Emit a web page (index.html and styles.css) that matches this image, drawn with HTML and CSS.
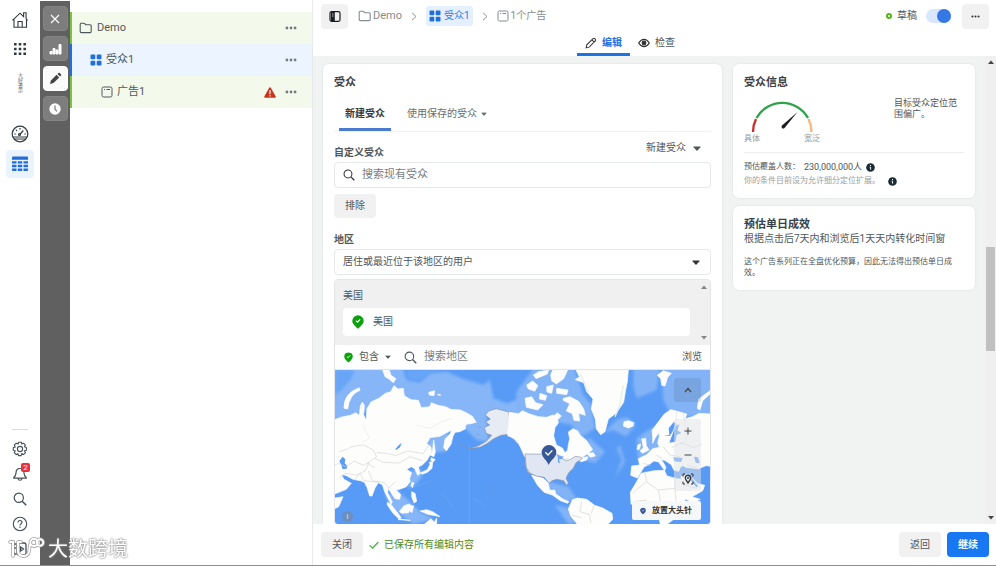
FILE: index.html
```html
<!DOCTYPE html>
<html lang="zh-CN">
<head>
<meta charset="utf-8">
<meta name="viewport" content="width=device-width, initial-scale=1">
<title>受众1</title>
<link rel="stylesheet" href="styles.css">
</head>
<body>
<svg class="defs" aria-hidden="true">
  <symbol id="i-folder" viewBox="0 0 14 12"><path d="M1.2 9.6V2.2q0-1 1-1h2.6q.6 0 1 .5l.8 1h4.6q1 0 1 1v5.9q0 1-1 1h-9q-1 0-1-1z" fill="none" stroke="currentColor" stroke-width="1.1"/></symbol>
  <symbol id="i-squares" viewBox="0 0 12 12"><path d="M1.5.5h2.8q1 0 1 1v2.8q0 1-1 1H1.500q-1 0-1-1V1.500q0-1 1-1zm6.200 0h2.800q1 0 1 1v2.800q0 1-1 1H7.700q-1 0-1-1V1.500q0-1 1-1zM1.500 6.700h2.800q1 0 1 1v2.800q0 1-1 1H1.500q-1 0-1-1V7.700q0-1 1-1zm6.200 0h2.800q1 0 1 1v2.800q0 1-1 1H7.700q-1 0-1-1V7.700q0-1 1-1z" fill="#216fdb"/></symbol>
  <symbol id="i-ad" viewBox="0 0 12 12"><rect x="1" y="1" width="10" height="10" rx="1.500" fill="none" stroke="currentColor"/><path d="M3 3.500h1M5.500 3.500H9" stroke="currentColor"/></symbol>
  <symbol id="i-dots" viewBox="0 0 12 4"><path d="M.5 2a1.400 1.400 0 1 0 2.800 0a1.400 1.400 0 1 0-2.800 0M4.600 2a1.400 1.400 0 1 0 2.800 0a1.400 1.400 0 1 0-2.800 0M8.700 2a1.400 1.400 0 1 0 2.800 0a1.400 1.400 0 1 0-2.800 0" fill="currentColor"/></symbol>
  <symbol id="i-search" viewBox="0 0 14 14"><circle cx="5.800" cy="5.800" r="4.600" fill="none" stroke="currentColor" stroke-width="1.200"/><path d="M9.200 9.200l4 4" stroke="currentColor" stroke-width="1.500"/></symbol>
  <symbol id="i-caret" viewBox="0 0 8 5"><path d="M.8.5h6.400q.6.200.2.800L4.500 4.600q-.5.400-1 0L.600 1.300Q.200.700.800.500z" fill="currentColor"/></symbol>
  <symbol id="i-chev" viewBox="0 0 6 9"><path d="M1 .800l4 3.700-4 3.700" fill="none" stroke="currentColor"/></symbol>
  <symbol id="i-pin" viewBox="0 0 12 14"><path d="M6 .300a5.700 5.700 0 0 1 5.700 5.600C11.700 9 8.500 11 6 13.800 3.500 11 .300 9 .300 5.900A5.700 5.700 0 0 1 6 .300z" fill="currentColor"/><path d="M4 5.800l1.500 1.400L8.200 4.400" fill="none" stroke="#fff" stroke-width="1.200"/></symbol>
  <symbol id="i-info" viewBox="0 0 9 9"><circle cx="4.500" cy="4.500" r="4.300" fill="#1c2b33"/><path d="M4.500 2v1.100M3.700 4.200h.9v2.400" stroke="#fff" fill="none"/></symbol>
</svg>

<div class="app">
  <nav class="nav" aria-label="主导航">
    <div class="nav-group">
      <a href="#" class="nav-item" aria-label="主页"><svg width="18" height="18" viewBox="0 0 18 18" fill="none" stroke="#333b40" stroke-width="1.100"><path d="M1.500 9.300L9 2.200l3.600 3.400V1.800h2.500v6l1.500 1.500M3 8.300v8h12.500V8M7 16.300v-5.800h4.200v5.800"/></svg></a>
      <button class="nav-item" aria-label="所有工具"><svg width="14" height="14" viewBox="0 0 14 14" fill="#333b40"><path d="M1 1h2.600v2.600H1zM5.700 1h2.600v2.600H5.700zM10.400 1H13v2.600h-2.600zM1 5.700h2.600v2.600H1zM5.700 5.700h2.600v2.600H5.700zM10.400 5.700H13v2.600h-2.600zM1 10.400h2.600V13H1zM5.700 10.400h2.600V13H5.700zM10.400 10.400H13V13h-2.600z"/></svg></button>
      <span class="nav-brand">大好書示</span>
      <a href="#" class="nav-item" aria-label="概览"><svg width="18" height="18" viewBox="0 0 18 18" fill="none" stroke="#333b40" stroke-width="1.200"><circle cx="9" cy="9" r="7.800"/><path d="M1.800 12h14.400M3 14h12M8.800 9.500l3.500-4" /><circle cx="8.500" cy="9.500" r="1"/><path d="M3.300 9h1.500M13.300 9h1.500M5 5l1 1M9 3v1.500"/></svg></a>
      <a href="#" class="nav-item active" aria-label="广告管理"><svg width="18" height="16" viewBox="0 0 18 16" fill="#216fdb"><path d="M2 .500h14q1 0 1 1v2.200H1V1.500q0-1 1-1zM1 5.200h4.500v2.400H1zM6.800 5.200h4.400v2.400H6.800zM12.500 5.200H17v2.400h-4.500zM1 8.800h4.500v2.400H1zM6.800 8.800h4.400v2.400H6.800zM12.500 8.800H17v2.400h-4.500zM1 12.400h4.500v2.600H2q-1 0-1-1zM6.800 12.400h4.400v2.600H6.800zM12.500 12.400H17V14q0 1-1 1h-3.500z"/></svg></a>
    </div>
    <div class="nav-group bottom">
      <button class="nav-item" aria-label="设置"><svg width="16" height="16" viewBox="0 0 16 16" fill="none" stroke="#465058" stroke-width="1.100"><path d="M6.700 1.300h2.600l.5 1.700 1.700-.9 1.900 1.900-.9 1.700 1.900.9v2.600l-1.900.7.9 1.800-1.900 1.900-1.800-.9-.7 1.900H6.600l-.7-1.900-1.700.9-1.900-1.900.9-1.700-1.900-.8V6.700L3.200 6l-.9-1.900 1.900-1.900 1.800.9z"/><circle cx="8" cy="8" r="2.600"/></svg></button>
      <button class="nav-item" aria-label="通知"><svg width="16" height="16" viewBox="0 0 16 16" fill="none" stroke="#465058" stroke-width="1.200"><path d="M8 2.500c-3 0-4 2-4 4.500 0 2-.8 3.200-2.200 4.500v.7h12.400v-.7C12.800 10.200 12 9 12 7c0-2.500-1-4.500-4-4.500zM6 12.500c.3 2.300 3.700 2.300 4 0"/></svg><span class="badge">2</span></button>
      <button class="nav-item" aria-label="搜索"><svg width="14" height="14"><use href="#i-search"/></svg></button>
      <button class="nav-item" aria-label="帮助"><svg width="16" height="16" viewBox="0 0 16 16" fill="none" stroke="#465058" stroke-width="1.100"><circle cx="8" cy="8" r="6.700"/><path d="M6 6.500c0-2.600 4-2.500 4-.2C10 7.800 8 7.600 8 9.400M8 10.600v1.300"/></svg></button>
      <button class="nav-item" aria-label="面板"><svg width="16" height="16" viewBox="0 0 16 16" fill="none" stroke="#465058" stroke-width="1.300"><rect x="5" y="2" width="9" height="12" rx="2"/><path d="M4.500 3H2v2M4.500 13H2v-2M2 7h2M8.500 6v4l3-2z"/></svg></button>
    </div>
  </nav>

  <aside class="rail" aria-label="视图">
    <button aria-label="关闭"><svg width="10" height="10" viewBox="0 0 10 10"><path d="M1 1l8 8M9 1L1 9" stroke="#fff" stroke-width="1.100"/></svg></button>
    <button aria-label="图表"><svg width="13" height="12" viewBox="0 0 13 12"><path d="M1 8.500h2V11H1zM4 5.500h2V11H4zM7 7h2v4H7zM10 1.500h2V11h-2z" fill="#fff" stroke="#fff"/></svg></button>
    <button class="on" aria-label="编辑"><svg width="13" height="13" viewBox="0 0 13 13" fill="#444"><path d="M1 12l.9-3.500L7.600 2.800l2.600 2.600-5.700 5.700zM8.500 1.900l.8-.8q.8-.6 1.500 0l1.100 1.100q.6.800 0 1.500l-.8.800z"/></svg></button>
    <button aria-label="历史"><svg width="12" height="12" viewBox="0 0 12 12"><circle cx="6" cy="6" r="5.700" fill="#fff"/><path d="M6 2.500V6.300l2 2" fill="none" stroke="#777" stroke-width="1.200"/></svg></button>
  </aside>

  <section class="tree" aria-label="广告结构">
    <div class="tree-row green"><svg width="14" height="12"><use href="#i-folder"/></svg><span class="name">Demo</span><button class="more" aria-label="更多"><svg width="12" height="4"><use href="#i-dots"/></svg></button></div>
    <div class="tree-row blue lvl2"><svg width="12" height="12"><use href="#i-squares"/></svg><span class="name">受众1</span><button class="more" aria-label="更多"><svg width="12" height="4"><use href="#i-dots"/></svg></button></div>
    <div class="tree-row green lvl3"><svg width="12" height="12"><use href="#i-ad"/></svg><span class="name">广告1</span><svg width="12" height="11" viewBox="0 0 12 11"><path d="M6 .300q.500 0 .8.500l4.900 8.700q.4 1.200-.8 1.300H1.100Q-.1 10.700.300 9.500L5.200.800Q5.500.300 6 .300z" fill="#c9341c"/><path d="M6 3.300v3.900M6 8.200v1.300" stroke="#fff" stroke-width="1.200"/></svg><button class="more" aria-label="更多"><svg width="12" height="4"><use href="#i-dots"/></svg></button></div>
  </section>

  <main class="main">
    <header class="top">
      <div class="crumbs">
        <button class="btn square" aria-label="切换侧栏"><svg width="12" height="11" viewBox="0 0 12 11"><rect x="1" y=".700" width="10" height="9.600" rx="1.500" fill="none" stroke="#1c1e21" stroke-width="1.200"/><path d="M2 1h3.800v9H2z" fill="#1c1e21"/><path d="M3 3h1.500M3 5h1.500" stroke="#fff" stroke-width=".7"/></svg></button>
        <a href="#" class="crumb first"><svg width="14" height="12"><use href="#i-folder"/></svg>Demo</a>
        <svg class="sep" width="6" height="9"><use href="#i-chev"/></svg>
        <a href="#" class="crumb current"><svg width="12" height="12"><use href="#i-squares"/></svg>受众1</a>
        <svg class="sep" width="6" height="9"><use href="#i-chev"/></svg>
        <a href="#" class="crumb"><svg width="12" height="12"><use href="#i-ad"/></svg>1个广告</a>
        <div class="status">
          <span class="ring"></span><label for="publish">草稿</label>
          <input type="checkbox" id="publish" class="switch" checked>
          <button class="btn square" aria-label="更多操作"><svg width="9" height="3" viewBox="0 0 12 4" color="#333"><use href="#i-dots"/></svg></button>
        </div>
      </div>
      <div class="modes">
        <button class="mode on"><svg width="12" height="12" viewBox="0 0 13 13" fill="none" stroke="#333" stroke-width="1.100"><path d="M1.200 11.800l.8-3.300L8.700 1.800q.9-.9 1.800 0l.7.700q.9.900 0 1.800L4.500 11zM7.500 3l2.500 2.500"/></svg>编辑</button>
        <button class="mode"><svg width="12" height="10" viewBox="0 0 12 10" fill="none" stroke="#333" stroke-width="1.200"><path d="M.700 5Q3 1.400 6 1.400T11.300 5Q9 8.600 6 8.600T.700 5z"/><circle cx="6" cy="5" r="1.800" fill="#333"/></svg>检查</button>
      </div>
    </header>

    <div class="work">
      <div class="cards">
        <section class="card audience">
          <h2>受众</h2>
          <div class="tabs"><button class="tab on">新建受众</button><button class="tab">使用保存的受众<svg width="6" height="4" viewBox="0 0 8 5"><use href="#i-caret"/></svg></button></div>
          <div class="field-head"><label for="custom">自定义受众</label><button class="link">新建受众<svg width="8" height="5"><use href="#i-caret"/></svg></button></div>
          <div class="box search"><svg width="12" height="12" viewBox="0 0 14 14"><use href="#i-search"/></svg><input id="custom" type="text" placeholder="搜索现有受众"></div>
          <button class="btn exclude">排除</button>
          <label class="place-label" for="place">地区</label>
          <div class="box choose"><select id="place"><option>居住或最近位于该地区的用户</option></select><svg width="8" height="5"><use href="#i-caret"/></svg></div>
          <div class="geo">
            <div class="picked">
              <div class="picked-body">
                <span>美国</span>
                <div class="picked-item"><svg width="12" height="14"><use href="#i-pin"/></svg>美国</div>
              </div>
              <div class="mini-scroll"><svg width="6" height="4" viewBox="0 0 6 4"><path d="M0 4l3-3.500L6 4z"/></svg><svg width="6" height="4" viewBox="0 0 6 4"><path d="M0 0l3 3.500L6 0z"/></svg></div>
            </div>
            <div class="include">
              <button class="link inc"><svg class="pin" width="9" height="11" viewBox="0 0 12 14"><use href="#i-pin"/></svg>包含<svg class="caret" width="6" height="4" viewBox="0 0 8 5"><use href="#i-caret"/></svg></button>
              <svg width="13" height="13" viewBox="0 0 14 14"><use href="#i-search"/></svg>
              <input type="text" placeholder="搜索地区" aria-label="搜索地区">
              <button class="link">浏览</button>
            </div>
            <div class="map">
              <svg class="map-art" viewBox="0 0 1125 462" preserveAspectRatio="xMidYMid slice" aria-label="世界地图">
                <defs><filter id="shelf" x="-5%" y="-5%" width="110%" height="110%"><feGaussianBlur stdDeviation="5"/></filter></defs>
                <rect width="1125" height="462" fill="#579bf6"/>
                <g transform="translate(-15 -15)">
                  <g fill="#86b6f8" filter="url(#shelf)">
                    <path d="M0 0H215L230 45 270 52 300 25 350 20 400 42 460 60 480 45 490 100 530 115 560 105 580 60 640 20V165L590 150 535 145 490 135 470 150 475 230 440 225 415 200 360 140 270 135 230 110 190 80 110 140 0 170z"/>
                    <path d="M285 215L345 200 360 205 345 260 310 262 290 245zM240 320L270 308 275 335 255 360 235 372zM165 390L200 375 240 410 270 440 310 462 250 478 185 430z"/>
                  </g>
                  <g filter="url(#shelf)"><path d="M15 15H75L65 40 35 75 15 90zM225 15H330L300 25 270 50 235 42z" fill="#68a5f7"/></g>
                  <g fill="#fdfdfc" stroke="#fdfdfc" stroke-width="2" stroke-linejoin="round">
                    <path d="M10 165l25-9 25-5 18-8 10 8 3-28 6-12 6 10-2 28 7 17 3-35 12-20 25-12 18-14 16-5 10-18 12 10 16-2 3 22 20 12 22 2 9 22 25-3 5-12 20 8 23 4 15 8 30 2 20 10 15 9 12 18-17 4-14 2-2 14-17 8-14 2-6 12-6 24-14 20-8-10 4-26 16-16 3-10-16 8-18 10-30 4-10 18 13 10 2 16-14 24-14 14-12 6 6 20-8 5-9-20-10-6-14 8 15 10-6 18 2 8-12 16-20 8-10 2 13 14-3 14-14-2-12-18-8-12-2 12 14 28-4 6-18-34-8-24-12-6-10 16-9 24h-7l-8-26-8-15-12-5-22-4-22-12-13-2 8 14 22 12-15 18-35 14z"/>
                    <path d="M42 130Q40 85 88 68L90 76Q58 88 53 132zM158 15h20l5 16 15 10-8 12-12-10-13-8zM296 82l18-5-2 15-14-2zM322 88l10 1-2 3zM300 270l7-10 4-35 5 35-4 15zM308 292l-2 18-14 12-16 6-4-5 20-9 8-16-2-7zM304 278l12 6-8 8-6-6zM246 352l6 2-5 14-4-6zM208 440l14-18 16-5 5 6-7 20-20 2zM172 412l10 5 22 28 10 14-7 3-18-17-17-25zM245 380l10 5 5 24-8 5-7-18zM238 420l13 3-5 20-6-5zM270 438l20-4 18 6 22 15-15-3-22-4zM205 462l36 4-36-2zM10 400l29-5-13 30-16 8zM283 478l20-17 10 10 7-12v19z"/>
                    <path d="M590 72l10-13v26zM584 98l16 2v30l-16-6z"/>
                  </g>
                  <path d="M28 288l10-13 8 8-2 12 8 8-2 8-12 2-4-12zM196 253l10-12 9-8-5 14-12 8z" fill="#579bf6"/>
                  <g fill="none" stroke="#d6d6d6" stroke-width="2">
                    <path d="M15 300l10-5 22 10 26-17 27 13 17-8-12 25-25 12-35-5-16 15M27 260l25-7 13-8 35-5 30 15 10 20-28 20 23 14M140 263l30 2 25 6 40-13 45 8 12-20 12-8M135 280l25 12 48 2 32-19 38 12M115 318l13 30 34 4 14 18 20-20M73 345l18-20 10 22 45 5"/>
                    <path d="M260 180l40 10 36-20 30-10M98 180l20 40-20 12" opacity=".5"/>
                  </g>
                  <path d="M536 143h34v100l-18-20-16-14z" fill="#fdfdfc"/>
                  <path d="M466 150l10-12 22-7 38 10 1 67-24 3-22 10-22 16-18 9-35 6 28-9 25-14 16-18-16-6-6-17 16-8-12-9 14-9zM537 208l14 10 18 24M585 267h18v61l-10-8-7-22z" fill="#e6ebf4" stroke="#8d96ab" stroke-width="2"/>
                  <path d="M380 230q25 24 57 20M478 366l5 2M486 372l8 3M447 185l6 3M440 208l8 2" fill="none" stroke="#7e91b0" stroke-width="2"/>
                  <path d="M418 235v243M335 385l20 20 15 28M260 365l45-20M430 400l35 25" stroke="#6ca7f7" stroke-width="2" fill="none"/>
                </g>
                <g transform="translate(555 -15)">
                  <g fill="#82b3f7" filter="url(#shelf)">
                    <path d="M-10 80L40 10 160 0 190 90 215 120 225 190 180 220 155 180 110 170 20 150-10 150zM160 230l50-10 45 40-30 35-50-15zM250 205l40-40 30-10 28 25-30 35-38-20zM340 0h80l-10 75-60 25-10-35zM425 0h165v160l-90-5-45 0-25-50zM350 220l50-35 30 30-15 50-60 30zM440 210l30-20-10 50-30-4zM55 330l30 20 60 15 25 35-30 10-45-30z"/>
                    <path d="M300 240l15 50-30 50 20-55-15-35zM105 420l45 10 15 48h-20z"/>
                  </g>
                  <g fill="#fdfdfc" stroke="#fdfdfc" stroke-width="2" stroke-linejoin="round">
                    <path d="M-33 142l28 5 12-10 22 10 26 8 25 2 18-7 14 9 3 15-10 14-4 24 8 28 18 9 8 14 8-8 2-16 4-18-4-20 14-10 14 6 8 14 17 14 12 17 8 12-18 14-16 10 20-3-4 10-16 5-10-5-20 10-24 4-16-20-100-4-18-40-12-14-21-9z"/>
                    <path d="M168 15h157l-3 35-6 30-5 32-22 32-24 18-10 38-13 9-13-17-3-30-12-30 5-30-19-22-9-27-25-9 12-9zM312 170l14-3 16 6-3 10-14 6-15-6zM20 60l18-12 16 14-10 17-20-8zM15 100l20-5 12 18 22 6-16 16-34-8zM60 85l20 7-4 14-18-4zM80 65l20-5-5 25-14-4zM40 30l16-10 30-5-4 12-34 14zM92 30l6-15h45l-12 26-22 16-14-10zM110 70l34 5-4 14-30-4zM130 100l20-5 26 14 15 22 5 20-20-6 3 23-17-2-5-20-18-8 10-22-20-10zM96 158l16-15 12 10-14 14zM200 265l20-2 6 10-15 4zM365 222l12-2 2 22 8 13-20 10-7-8 10-8zM353 240l9-3-3 15-8 2zM412 30l18-13 24 8-11 12-8 26-10-2-3-20zM532 130l4-28 34-25v10l-22 20-8 28z"/>
                    <path d="M398 216l-2-20 18-24 18-24 20-14 20 5 28 8-4 14 22-6 20-10 37 2V305l-23-5-20-12-20 5-30 12-6 14-14-3-8-17-18-12-12-4 14 24-4 10-18-26-14-3-14 10-16 8-20 33-20-8 3-28 24-3-4-19 25-12 18-18 20-4-5-14 5-18-2-12-10 15-8 17zM472 288l34-12 44 8 18 14-34 14-38-5z"/>
                    <path d="M363 325l40-8 30-1 8 17 30 8 22 2 8 22 15 30 25 8-20 10-25-10-10 40-25 20-20 15h-20l-8-40-50 8-30-30-2-34 18-30zM482 335l22-7 30 28 20 5-6 16-35 20-14-18zM145 432l12-28 15-5 28 4 24 18 24 8 28 16 2 18-14 15H172l-20-25zM35 330l35 10 15 15 4 20 16 1 2 10 22 16 18 8-4 5-22-8-24-17-25-8-20-22-10-17z"/>
                  </g>
                  <path d="M458 206l8-24 12-4-6 18 12 8-14 6-4 20-18 3zM432 212l16-2-2-20 16-20 5 8-10 23-8 12zM460 277l28 2-5 12-20-2zM522 275l12 2 5 18-12-2zM425 150l-20 28 8-28z" fill="#579bf6"/>
                  <path d="M15 267l96 1 13 10 14 10 14-5 14-9 18 3 3 4-19 12-8 17-14 13-8 17 7 14-5 7-9-14-21-4-14 4-9 8-14-18-24-4-18-8-12-17z" fill="#e1e7f2" stroke="#8d96ab" stroke-width="2"/>
                  <path d="M112 270l18 5-4 7-9 0 2 12-5-2 0-14zM132 284l12-3" fill="#6ea8f7" stroke="#6ea8f7"/>
                  <g fill="none" stroke="#d3d3d3" stroke-width="2">
                    <path d="M338 385l40-35 37 25 50-5v-35M380 350l-5-30M415 375l10 55M465 370l4 50M338 410l40-5 10 45M395 430l70-15M370 295l22 6M408 270l18 10M430 245l20 25 30 5M455 248l30-15 35 15 25-10M500 300l30 8M185 410l-5 30 28 8 5 25M222 420l-8 26M155 450l30 8M490 360l40 10"/>
                    <path d="M470 140l-4 55M490 145l12 70-20 25" opacity=".7"/>
                  </g>
                  <path d="M500 320l15 25 17 20" stroke="#579bf6" stroke-width="7" fill="none"/>
                  <path d="M310 60l-10 60-15 35M180 25l25 55" stroke="#e5eee2" stroke-width="4" fill="none"/>
                  <path d="M86 300C80 285 65 278 65 262a22 22 0 0 1 44 0c0 16-17 23-23 38z" fill="#365899"/>
                  <path d="M76 262l8 8 13-14" stroke="#fff" stroke-width="4" fill="none"/>
                </g>
              </svg>
              <span class="map-info">i</span>
              <div class="map-tools">
                <button aria-label="收起"><svg width="8" height="6" viewBox="0 0 8 6"><path d="M1 5l3-3.500L7 5" fill="none" stroke="#444" stroke-width="1.200"/></svg></button>
                <div class="zoomer">
                  <button aria-label="放大"><svg width="8" height="8" viewBox="0 0 8 8"><path d="M4 .500v7M.500 4h7" stroke="#444"/></svg></button>
                  <button aria-label="缩小"><svg width="8" height="8" viewBox="0 0 8 8"><path d="M.500 4h7" stroke="#444"/></svg></button>
                  <button aria-label="定位"><svg width="12" height="12" viewBox="0 0 12 12" fill="none" stroke="#333"><path d="M1 3.500V1h2M9 1h2v2.500M1 8.500V11h2M9 11h2V8.500"/><path d="M6 10C5 8 3.300 6.800 3.300 5a2.700 2.700 0 0 1 5.400 0C8.700 6.800 7 8 6 10z" stroke-width="1.300"/><circle cx="6" cy="5" r=".6"/></svg></button>
                </div>
              </div>
              <button class="drop-pin"><svg width="6" height="8" viewBox="0 0 12 14"><use href="#i-pin"/></svg>放置大头针</button>
            </div>
          </div>
        </section>

        <div class="side">
          <section class="card info">
            <h2>受众信息</h2>
            <div class="gauge-row">
              <div class="gauge">
                <svg width="62" height="33" viewBox="0 0 62 33" fill="none" stroke-width="2.400"><path d="M2 32A29.500 29.500 0 0 1 5 19" stroke="#c9302c"/><path d="M5.500 18A29.500 29.500 0 0 1 57 18" stroke="#31a24c"/><path d="M57.500 19A29.500 29.500 0 0 1 60.500 32" stroke="#f7b87a"/><path d="M31 25.500L46.500 12 33.500 28q-1.500 1-2.500 0t0-2.500z" fill="#1c1e21"/></svg>
                <div class="gauge-ends"><span>具体</span><span>宽泛</span></div>
              </div>
              <p>目标受众定位范围偏广。</p>
            </div>
            <p class="reach">预估覆盖人数： <span>230,000,000人</span><svg width="9" height="9"><use href="#i-info"/></svg></p>
            <p class="hint">你的条件目前设为允许细分定位扩展。<svg width="9" height="9"><use href="#i-info"/></svg></p>
          </section>
          <section class="card daily">
            <h2>预估单日成效</h2>
            <p class="window">根据点击后7天内和浏览后1天天内转化时间窗</p>
            <p class="note">这个广告系列正在全盘优化预算，因此无法得出预估单日成效。</p>
          </section>
        </div>
      </div>
      <div class="scrollbar" aria-hidden="true"><svg width="6" height="4" viewBox="0 0 6 4"><path d="M0 4l3-3.500L6 4z"/></svg><div class="track"><div class="thumb"></div></div><svg width="6" height="4" viewBox="0 0 6 4"><path d="M0 0l3 3.500L6 0z"/></svg></div>
    </div>

    <footer class="foot">
      <button class="btn">关闭</button>
      <span class="saved"><svg width="10" height="8" viewBox="0 0 10 8"><path d="M.700 4.300l2.800 2.800L9.400 1" fill="none" stroke="#3fae3f" stroke-width="1.200"/></svg>已保存所有编辑内容</span>
      <button class="btn back">返回</button>
      <button class="btn primary">继续</button>
    </footer>
  </main>
</div>

<div class="watermark">
  <svg width="37" height="24" viewBox="0 0 37 24" fill="none" stroke-linecap="round"><g stroke="#9b9b9b" stroke-width="3.400"><path d="M2 6h3v14M10 6v9c0 6 9 7 11 1l1-7M10 6h3"/><circle cx="26" cy="6.500" r="3.700"/><circle cx="32" cy="6.500" r="3.300"/></g><g stroke="#fff" stroke-width="2"><path d="M2 6h3v14M10 6v9c0 6 9 7 11 1l1-7M10 6h3"/><circle cx="26" cy="6.500" r="3.700"/><circle cx="32" cy="6.500" r="3.300"/></g></svg>
  <span>大数跨境</span>
</div>
</body>
</html>
```
FILE: styles.css
```css
* { box-sizing: border-box; }

body {
  margin: 0;
  font: 10px/16px Roboto, "Noto Sans CJK SC", sans-serif;
  color: #50575c;
  background: #fff;
}

h2, p { margin: 0; }
h2 { font-size: 11px; line-height: 16px; font-weight: 700; color: #3a4146; }
a { color: inherit; text-decoration: none; }
button, input, select { font: inherit; color: inherit; border: 0; background: none; padding: 0; margin: 0; }
button { cursor: pointer; }
svg { flex: none; display: block; }
.defs { position: absolute; width: 0; height: 0; }

.app { display: flex; height: 100vh; border-bottom: 1px solid #8f8f8f; }

/* Left navigation */
.nav { flex: none; width: 40px; display: flex; flex-direction: column; justify-content: space-between; padding: 5px 6px 4px; }
.nav-group { display: flex; flex-direction: column; align-items: center; }
.nav-item { position: relative; width: 28px; height: 29px; display: grid; place-items: center; color: #465058; }
.nav-brand { writing-mode: vertical-rl; font: 5px/8px "Noto Sans CJK SC", sans-serif; height: 22px; margin: 10px 0 24px; }
.nav-item.active { height: 28px; margin-top: 2px; border-radius: 4px; background: #ebf3ff; }
.nav-group.bottom { border-top: 1px solid #d8dadd; padding-top: 6px; margin: 0 6px; }
.bottom .nav-item { height: 25px; }
.badge { position: absolute; left: 15px; top: 2px; width: 9px; height: 9px; border-radius: 2px; background: #e8303c; color: #fff; font-size: 8px; line-height: 9px; }

.rail { flex: none; width: 30px; margin-top: 1px; padding-top: 5px; background: #606060; display: flex; flex-direction: column; align-items: center; gap: 5px; }
.rail button { width: 25px; height: 25px; border-radius: 4px; background: #7d7d7d; display: grid; place-items: center; border: 1px solid #858585; }
.rail .on { background: #fafafa; border-color: #fff; }

/* Ad structure */
.tree { flex: none; width: 242px; padding-top: 12px; }
.tree-row { display: flex; align-items: center; height: 32px; padding: 0 15px 0 7px; border-left: 2px solid; font-size: 11px; }
.tree-row.green { background: #f3faec; border-left-color: #7cc142; }
.tree-row.blue { background: #ebf4ff; border-left-color: #216fdb; }
.tree-row.lvl2 { padding-left: 18px; }
.tree-row.lvl3 { padding-left: 29px; }
.name { flex: 1; margin-left: 4px; }
.more { margin-left: 9px; color: #747b80; }

/* Header */
.main { flex: 1; min-width: 0; display: flex; flex-direction: column; border-left: 1px solid #e6eaec; }
.top { flex: none; }
.crumbs { display: flex; align-items: center; height: 32px; padding: 0 7px 0 8px; }
.btn { height: 25px; border-radius: 4px; background: #f1f1f1; padding: 0 11px; }
.btn.square { width: 27px; padding: 0; display: grid; place-items: center; }
.crumb { display: flex; align-items: center; gap: 2px; height: 20px; color: #858b90; }
.crumb.first { margin-left: 10px; font-size: 11px; }
.crumb.first { gap: 1px; }
.crumb.current { background: #e4f0ff; color: #2b7de9; border-radius: 3px; padding: 0 3px; }
.crumb.current { gap: 3px; }
.sep { margin: 0 9px; color: #8c9196; }
.status { margin-left: auto; display: flex; align-items: center; }
.ring { width: 6px; height: 6px; border: 2px solid #55b513; border-radius: 50%; margin-right: 5px; }
.switch { appearance: none; width: 25px; height: 14px; margin: 0 11px 0 9px; border-radius: 7px; background: #d9e7fd; display: flex; justify-content: flex-end; }
.switch::before { content: ""; width: 14px; height: 14px; border-radius: 50%; background: #3578e5; }
.modes { display: flex; justify-content: center; height: 24px; padding-right: 49px; }
.mode { display: flex; align-items: center; gap: 5px; padding: 0 8px; height: 24px; border-bottom: 3px solid transparent; }
.mode.on { color: #1b74e4; font-weight: 700; border-bottom-color: #1b74e4; }

/* Work area */
.work { flex: 1; min-height: 0; display: flex; background: #f1f3f3; overflow: hidden; }
.cards { flex: 1; min-width: 0; display: grid; grid-template-columns: 399fr 242fr; gap: 11px; padding: 8px 10px 0; overflow: hidden; align-items: start; }
.card { background: #fff; border-radius: 6px; box-shadow: 0 0 2px #d4d8da; padding: 11px 11px 10px; }
.side { display: grid; gap: 8px; }

.tabs { display: flex; margin-top: 9px; border-bottom: 1px solid #f1f1f1; }
.tab { display: flex; align-items: center; gap: 4px; height: 31px; padding: 0 6px; margin: 0 5px; border-bottom: 3px solid transparent; color: #666d72; }
.tab.on { color: #333a3f; font-weight: 700; border-bottom-color: #4a7bd0; }
.field-head { display: flex; align-items: flex-end; justify-content: space-between; height: 30px; padding-bottom: 1px; }
.field-head label, .place-label { font-weight: 700; }
.field-head .link { padding: 0 10px 5px 0; }
.link { display: flex; align-items: center; gap: 7px; }
.box { display: flex; align-items: center; height: 26px; border: 1px solid #e6e8ea; border-radius: 4px; padding: 0 10px 0 8px; color: #333; }
.box input, .include input { flex: 1; min-width: 0; outline: 0; font-size: 11px; }
.search { gap: 7px; }
input::placeholder { color: #777e84; opacity: 1; }
.exclude { display: block; margin-top: 6px; height: 24px; }
.place-label { display: block; margin: 14px 0 1px; }
.choose select { flex: 1; appearance: none; outline: 0; color: #50575c; }

.geo { margin-top: 4px; border: 1px solid #e3e5e7; border-radius: 4px; overflow: hidden; }
.picked { display: flex; background: #f0f0f0; }
.picked-body { flex: 1; padding: 8px 8px 9px; }
.picked-item { display: flex; align-items: center; gap: 9px; height: 28px; margin-top: 4px; padding-left: 9px; border-radius: 4px; background: #fff; }
.picked-item svg, .pin { color: #0ca00c; }
.mini-scroll { width: 12px; padding: 5px 3px; display: flex; flex-direction: column; justify-content: space-between; fill: #858585; }
.include { display: flex; align-items: center; height: 25px; padding: 0 8px 0 9px; gap: 7px; border-bottom: 1px solid #e3e5e7; }
.inc { margin-right: 6px; gap: 6px; }

/* Map */
.map { position: relative; }
.map-art { width: 100%; aspect-ratio: 1125 / 462; }
.map-info { position: absolute; left: 7px; bottom: 2px; width: 11px; height: 11px; border-radius: 50%; background: #6c8fbe; color: #dfe6ef; font-size: 8px; line-height: 11px; text-align: center; }
.map-tools { position: absolute; right: 9px; top: 8px; display: flex; flex-direction: column; gap: 17px; }
.map-tools button { width: 27px; height: 24px; display: grid; place-items: center; border-radius: 3px; }
.map-tools > button { background: rgb(90 120 155 / 25%); }
.zoomer { display: flex; flex-direction: column; background: rgb(225 228 230 / 50%); border-radius: 3px; }
.drop-pin { position: absolute; right: 9px; bottom: 4px; display: flex; align-items: center; gap: 6px; height: 19px; padding: 0 9px 0 8px; border-radius: 2px; background: #f5f7f8; font-size: 8px; font-weight: 700; color: #333; }
.drop-pin svg { color: #365899; }

/* Side cards */
.gauge-row { display: flex; justify-content: space-between; padding: 7px 0 8px; border-bottom: 1px solid #eceeef; }
.gauge { width: 76px; font-size: 8px; line-height: 11px; color: #94999d; }
.gauge svg { margin: 2px auto 0; }
.gauge-ends { display: flex; justify-content: space-between; }
.gauge-row p { width: 70px; font-size: 9px; line-height: 11px; }
.reach, .hint { display: flex; align-items: center; gap: 4px; font-size: 8px; line-height: 14px; }
.reach { margin-top: 7px; }
.reach span { font-size: 9px; }
.hint { color: #999ea2; gap: 8px; }
.window { font-size: 10px; line-height: 12px; }
.note { font-size: 8px; line-height: 11px; margin-top: 11px; }
.daily { padding-bottom: 12px; }

.scrollbar { flex: none; width: 11px; display: flex; flex-direction: column; align-items: center; padding: 4px 0; background: #f0f0f0; fill: #444; }
.track { flex: 1; align-self: stretch; display: flex; flex-direction: column; padding: 0 1px; }
.track::before { content: ""; flex: 183; }
.thumb { flex: 104; background: #c1c1c1; }
.track::after { content: ""; flex: 165; }

/* Footer */
.foot { flex: none; display: flex; align-items: center; height: 41px; padding: 0 7px 0 8px; }
.saved { display: flex; align-items: center; gap: 5px; margin-left: 6px; color: #4b8b22; }
.back { margin-left: auto; }
.primary { margin-left: 6px; background: #1877f2; color: #fff; font-weight: 700; }

.watermark { position: fixed; left: 8px; bottom: 6px; display: flex; align-items: center; gap: 3px; pointer-events: none; }
.watermark span { font: 400 20px/24px "Noto Sans CJK SC", sans-serif; color: #fff; text-shadow: 0 0 2px #777, 0 0 2px #999; }
```
